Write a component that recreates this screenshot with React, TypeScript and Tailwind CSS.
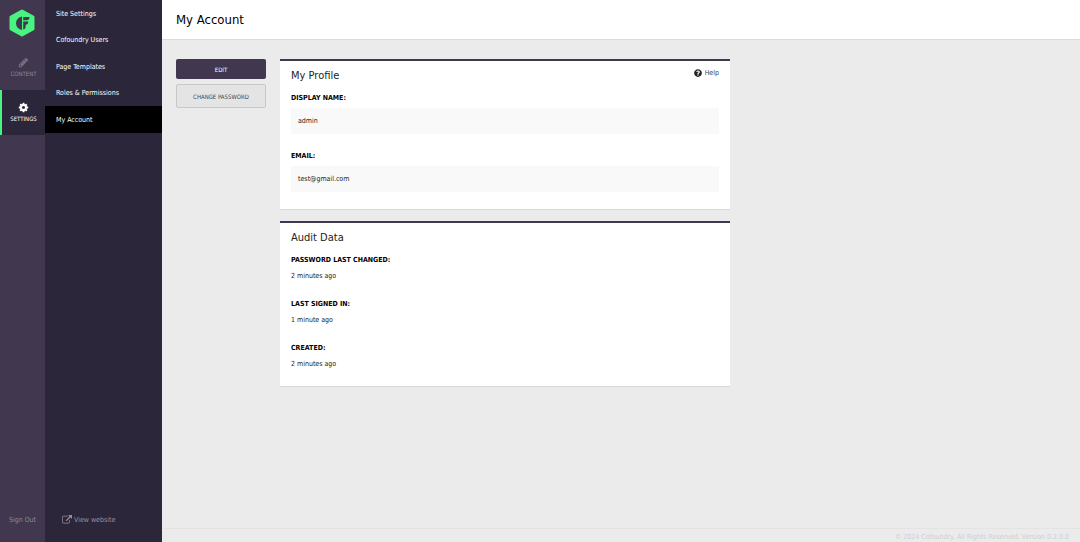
import React from "react";
import { FaQuestionCircle } from "react-icons/fa";

const menuItems = ["Site Settings", "Cofoundry Users", "Page Templates", "Roles & Permissions", "My Account"];

const auditEntries = [
    { label: "Password last changed:", value: "2 minutes ago" },
    { label: "Last signed in:", value: "1 minute ago" },
    { label: "Created:", value: "2 minutes ago" },
];

function Logo() {
    return (
        <svg viewBox="0 0 26 28" className="w-[26px] h-7" aria-label="Cofoundry">
            <path d="M13 2 24 8v12L13 26 2 20V8Z" fill="#4af282" stroke="#4af282" strokeWidth="3" strokeLinejoin="round" />
            <path d="M13 7.500v13.500A6.800 6.800 0 0 1 13 7.500Z" fill="#41384f" />
            <path d="M14.200 8h6.300c0 2.200-1 3.300-3 3.300h-3.300Zm0 4.500h5c0 2.200-.8 3.200-2.500 3.200v1.200c0 2-.8 3.300-2.500 3.600Z" fill="#41384f" />
        </svg>
    );
}

function PencilIcon() {
    return (
        <svg viewBox="0 0 1792 1792" className="size-[11px]" fill="#77717f" aria-hidden="true">
            <path d="M491 1536l91-91-235-235-91 91v107h128v128h107zm523-928q0-22-22-22-10 0-17 7l-542 542q-7 7-7 17 0 22 22 22 10 0 17-7l542-542q7-7 7-17zm-54-192l416 416-832 832h-416v-416zm683 96q0 53-37 90l-166 166-416-416 166-165q36-38 90-38 53 0 91 38l235 234q37 39 37 91z" />
        </svg>
    );
}

function CogIcon() {
    return (
        <svg viewBox="0 0 1792 1792" className="size-[11px]" fill="currentColor" aria-hidden="true">
            <path d="M1152 896q0-106-75-181t-181-75-181 75-75 181 75 181 181 75 181-75 75-181zm512-109v222q0 12-8 23t-20 13l-185 28q-19 54-39 91 35 50 107 138 10 12 10 25t-9 23q-27 37-99 108t-94 71q-12 0-26-9l-138-108q-44 23-91 38-16 136-29 186-7 28-36 28h-222q-14 0-24.500-8.500t-11.500-21.500l-28-184q-49-16-90-37l-141 107q-10 9-25 9-14 0-25-11-126-114-165-168-7-10-7-23 0-12 8-23 15-21 51-66.500t54-70.500q-27-50-41-99l-183-27q-13-2-21-12.500t-8-23.500v-222q0-12 8-23t19-13l186-28q14-46 39-92-40-57-107-138-10-12-10-24 0-10 9-23 26-36 98.500-107.500t94.500-71.500q13 0 26 10l138 107q44-23 91-38 16-136 29-186 7-28 36-28h222q14 0 24.500 8.500t11.500 21.500l28 184q49 16 90 37l142-107q9-9 24-9 13 0 25 10 129 119 165 170 7 8 7 22 0 12-8 23-15 21-51 66.500t-54 70.500q26 50 41 98l183 28q13 2 21 12.500t8 23.500z" />
        </svg>
    );
}

function ExternalLinkIcon() {
    return (
        <svg viewBox="0 0 1792 1792" className="size-[10px]" fill="currentColor" aria-hidden="true">
            <path d="M1408 928v320q0 119-84.500 203.500t-203.500 84.500h-832q-119 0-203.500-84.500t-84.500-203.500v-832q0-119 84.500-203.500t203.500-84.500h704q14 0 23 9t9 23v64q0 14-9 23t-23 9h-704q-66 0-113 47t-47 113v832q0 66 47 113t113 47h832q66 0 113-47t47-113v-320q0-14 9-23t23-9h64q14 0 23 9t9 23zm384-864v512q0 26-19 45t-45 19-45-19l-176-176-652 652q-10 10-23 10t-23-10l-114-114q-10-10-10-23t10-23l652-652-176-176q-19-19-19-45t19-45 45-19h512q26 0 45 19t19 45z" />
        </svg>
    );
}

// Narrow bar with the module groups
function ModuleBar() {
    return (
        <nav className="w-[45px] shrink-0 flex flex-col bg-[#41384f]">
            <a href="#" className="h-[45px] flex items-center justify-center pr-px">
                <Logo />
            </a>
            <a href="#content" className="h-[45px] flex flex-col items-center justify-center gap-[2px] border-l-2 border-transparent text-[6px] leading-2 text-[#8d8895]">
                <PencilIcon />
                CONTENT
            </a>
            <a href="#settings" className="h-[45px] flex flex-col items-center justify-center gap-[2px] border-l-2 border-[#4af282] bg-[#2c263a] text-[6px] leading-2 text-white">
                <CogIcon />
                SETTINGS
            </a>
            <a href="#signout" className="mt-auto mb-4 text-center text-[7px] leading-3 text-[#8d8895]">Sign Out</a>
        </nav>
    );
}

function SettingsMenu() {
    return (
        <nav className="w-[117px] shrink-0 flex flex-col bg-[#2c263a]">
            <ul className="h-[133px] grid auto-rows-fr">
                {menuItems.map((item) => (
                    <li key={item} className={item === "My Account" ? "bg-black" : ""}>
                        <a href="#" className="h-full flex items-center pt-px pl-[11px] text-[7px] text-white">{item}</a>
                    </li>
                ))}
            </ul>
            <a href="#site" className="mt-auto mb-4 ml-[17px] flex items-center gap-[2px] text-[7px] leading-3 text-[#96929c]">
                <ExternalLinkIcon />
                View website
            </a>
        </nav>
    );
}

function Panel({ title, action, children }: { title: string; action?: React.ReactNode; children: React.ReactNode }) {
    return (
        <section className="bg-white border-t-2 border-t-[#41384f] border-b border-b-[#d9d9d9] px-[11px] pt-[7px]">
            <header className="flex justify-between">
                <h2 className="text-[11px] leading-4">{title}</h2>
                {action}
            </header>
            {children}
        </section>
    );
}

export default function App() {
    return (
        <div className="min-h-screen flex bg-[#ebebeb] font-['DejaVu_Sans_Condensed','DejaVu_Sans',sans-serif] text-[#222]">
            <ModuleBar />
            <SettingsMenu />
            <div className="flex-1 flex flex-col">
                <header className="h-10 flex items-center px-[14px] bg-white border-b border-[#dcdcdc]">
                    <h1 className="text-[13px] text-black">My Account</h1>
                </header>

                <main className="flex-1 flex gap-[14px] px-[14px] pt-[19px]">
                    <div className="w-[90px] shrink-0 flex flex-col gap-[5px]">
                        <button className="h-5 rounded-[2px] bg-[#41384f] text-[6px] text-white">EDIT</button>
                        <button className="h-6 rounded-[2px] border border-[#c8c8c8] bg-[#e4e4e4] text-[6px] text-[#444]">CHANGE PASSWORD</button>
                    </div>

                    <div className="flex-1 max-w-[450px] flex flex-col gap-[11px]">
                        <Panel
                            title="My Profile"
                            action={
                                <a href="#help" className="self-start pt-px flex items-center gap-[3px] text-[7px] leading-2 text-[#444]">
                                    <FaQuestionCircle className="size-2 text-[#222]" />
                                    Help
                                </a>
                            }
                        >
                            <dl>
                                <dt className="mt-2 text-[7px] leading-3 font-bold text-black">DISPLAY NAME:</dt>
                                <dd className="mt-1 h-[26px] flex items-center pt-px px-[7px] bg-[#f9f9f9] text-[7px]">admin</dd>
                                <dt className="mt-4 text-[7px] leading-3 font-bold text-black">EMAIL:</dt>
                                <dd className="mt-1 mb-[17px] h-[26px] flex items-center pt-px px-[7px] bg-[#f9f9f9] text-[7px]">test@gmail.com</dd>
                            </dl>
                        </Panel>

                        <Panel title="Audit Data">
                            <dl className="pb-2">
                                {auditEntries.map((entry) => (
                                    <div key={entry.label} className="h-11 pt-2">
                                        <dt className="text-[7px] leading-3 font-bold text-black uppercase">{entry.label}</dt>
                                        <dd className="mt-1 text-[7px] leading-3">{entry.value}</dd>
                                    </div>
                                ))}
                            </dl>
                        </Panel>
                    </div>
                </main>

                <footer className="h-[14px] px-[11px] pt-[2px] border-t border-[#e3e3e3] text-right text-[7px] leading-3 text-[#cfcfcf]">
                    © 2024 Cofoundry. All Rights Reserved. Version 0.2.0.0
                </footer>
            </div>
        </div>
    );
}
